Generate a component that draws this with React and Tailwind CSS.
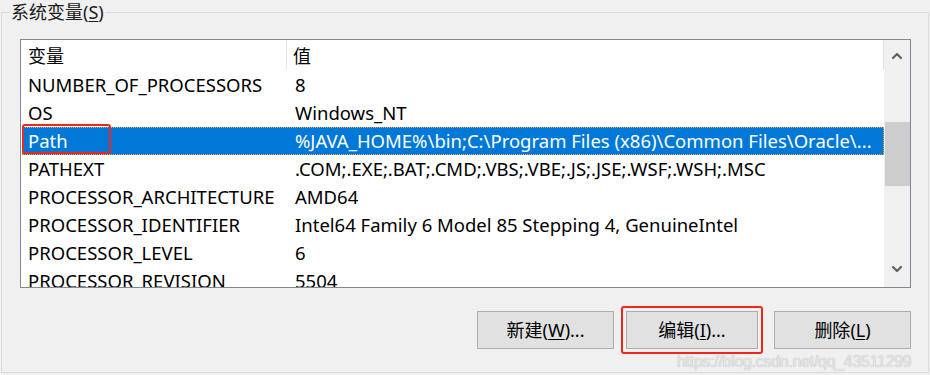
import { ChevronUp, ChevronDown } from "lucide-react";

const rows = [
  ["NUMBER_OF_PROCESSORS", "8"],
  ["OS", "Windows_NT"],
  ["Path", "%JAVA_HOME%\\bin;C:\\Program Files (x86)\\Common Files\\Oracle\\..."],
  ["PATHEXT", ".COM;.EXE;.BAT;.CMD;.VBS;.VBE;.JS;.JSE;.WSF;.WSH;.MSC"],
  ["PROCESSOR_ARCHITECTURE", "AMD64"],
  ["PROCESSOR_IDENTIFIER", "Intel64 Family 6 Model 85 Stepping 4, GenuineIntel"],
  ["PROCESSOR_LEVEL", "6"],
  ["PROCESSOR_REVISION", "5504"],
];

const font = {
  fontFamily: '"Noto Sans", "Noto Sans CJK SC", sans-serif',
};

const Button = ({ label, hotkey, rest, width }) => (
  <div
    className={`${width} h-[38px] flex items-center justify-center bg-[#e1e1e1] border border-[#adadad] text-[18px] text-black`}
  >
    <span>
      {label}(<span className="underline underline-offset-2">{hotkey}</span>){rest}
    </span>
  </div>
);

export default function App() {
  return (
    <div
      className="relative w-[930px] h-[375px] bg-[#f0f0f0] overflow-hidden text-black"
      style={font}
    >
      {/* group box */}
      <div className="relative ml-[1px] mt-[12px] w-[928px] h-[361px] border border-[#dcdcdc]">
        <div className="absolute left-[8px] top-[-13px] px-[1px] bg-[#f0f0f0] text-[18px] leading-[24px] text-[#1a1a1a]">
          系统变量(<span className="underline underline-offset-2">S</span>)
        </div>

        <div className="pt-[26px] pl-[18px]">
          {/* list view */}
          <div className="w-[891px] h-[249px] border border-[#828790] bg-white flex overflow-hidden">
            <div className="w-[863px] flex flex-col">
              {/* header */}
              <div className="h-[31px] shrink-0 flex text-[18px]">
                <div className="w-[266px] pl-[7px] pt-[3px] border-r border-[#e5e5e5] h-[30px]">
                  变量
                </div>
                <div className="flex-1 pl-[6px] pt-[3px] border-r border-[#e5e5e5] h-[30px]">
                  值
                </div>
              </div>
              {rows.map(([name, value]) => {
                const sel = name === "Path";
                return (
                  <div
                    key={name}
                    className={`h-[28px] shrink-0 flex items-center text-[18.5px] leading-[28px] ${
                      sel
                        ? "bg-[#0078d7] text-white border border-dotted border-[#f0a040] ml-[1px]"
                        : "border border-transparent ml-[1px]"
                    }`}
                  >
                    <div className="w-[265px] pl-[5px] whitespace-nowrap">
                      {name}
                    </div>
                    <div className="flex-1 min-w-0 pl-[7px] pr-[6px] whitespace-nowrap">
                      {value}
                    </div>
                  </div>
                );
              })}
            </div>
            {/* scrollbar */}
            <div className="w-[26px] bg-[#f0f0f0] flex flex-col items-center">
              <div className="h-[30px] w-full flex items-center justify-center pt-[2px]">
                <ChevronUp size={16} strokeWidth={3.2} color="#606060" />
              </div>
              <div className="h-[52px]" />
              <div className="h-[64px] w-[25px] bg-[#cdcdcd]" />
              <div className="flex-1" />
              <div className="h-[30px] w-full flex items-center justify-center pb-[6px]">
                <ChevronDown size={16} strokeWidth={3.2} color="#606060" />
              </div>
            </div>
          </div>

          {/* buttons */}
          <div className="mt-[23px] flex pl-[457px]">
            <Button label="新建" hotkey="W" rest="..." width="w-[137px]" />
            <div className="w-[12px]" />
            <Button label="编辑" hotkey="I" rest="..." width="w-[132px]" />
            <div className="w-[16px]" />
            <Button label="删除" hotkey="L" rest="" width="w-[137px]" />
          </div>
        </div>
      </div>

      {/* annotation boxes */}
      <div className="absolute left-[22px] top-[124px] w-[89px] h-[30px] border-[2.5px] border-[#f0251c] rounded-[3px]" />
      <div className="absolute left-[621px] top-[306px] w-[142px] h-[48px] border-[2.5px] border-[#f0251c] rounded-[3px]" />

      {/* watermark */}
      <div
        className="absolute left-[677px] top-[351px] text-[16px] leading-[22px] tracking-[-0.3px] text-[#e6e6e6] [text-shadow:0_0_1px_#a8a8a8] whitespace-nowrap"
        style={{ fontFamily: '"Liberation Sans", Arial, sans-serif' }}
      >
        https://blog.csdn.net/qq_43511299
      </div>
    </div>
  );
}
